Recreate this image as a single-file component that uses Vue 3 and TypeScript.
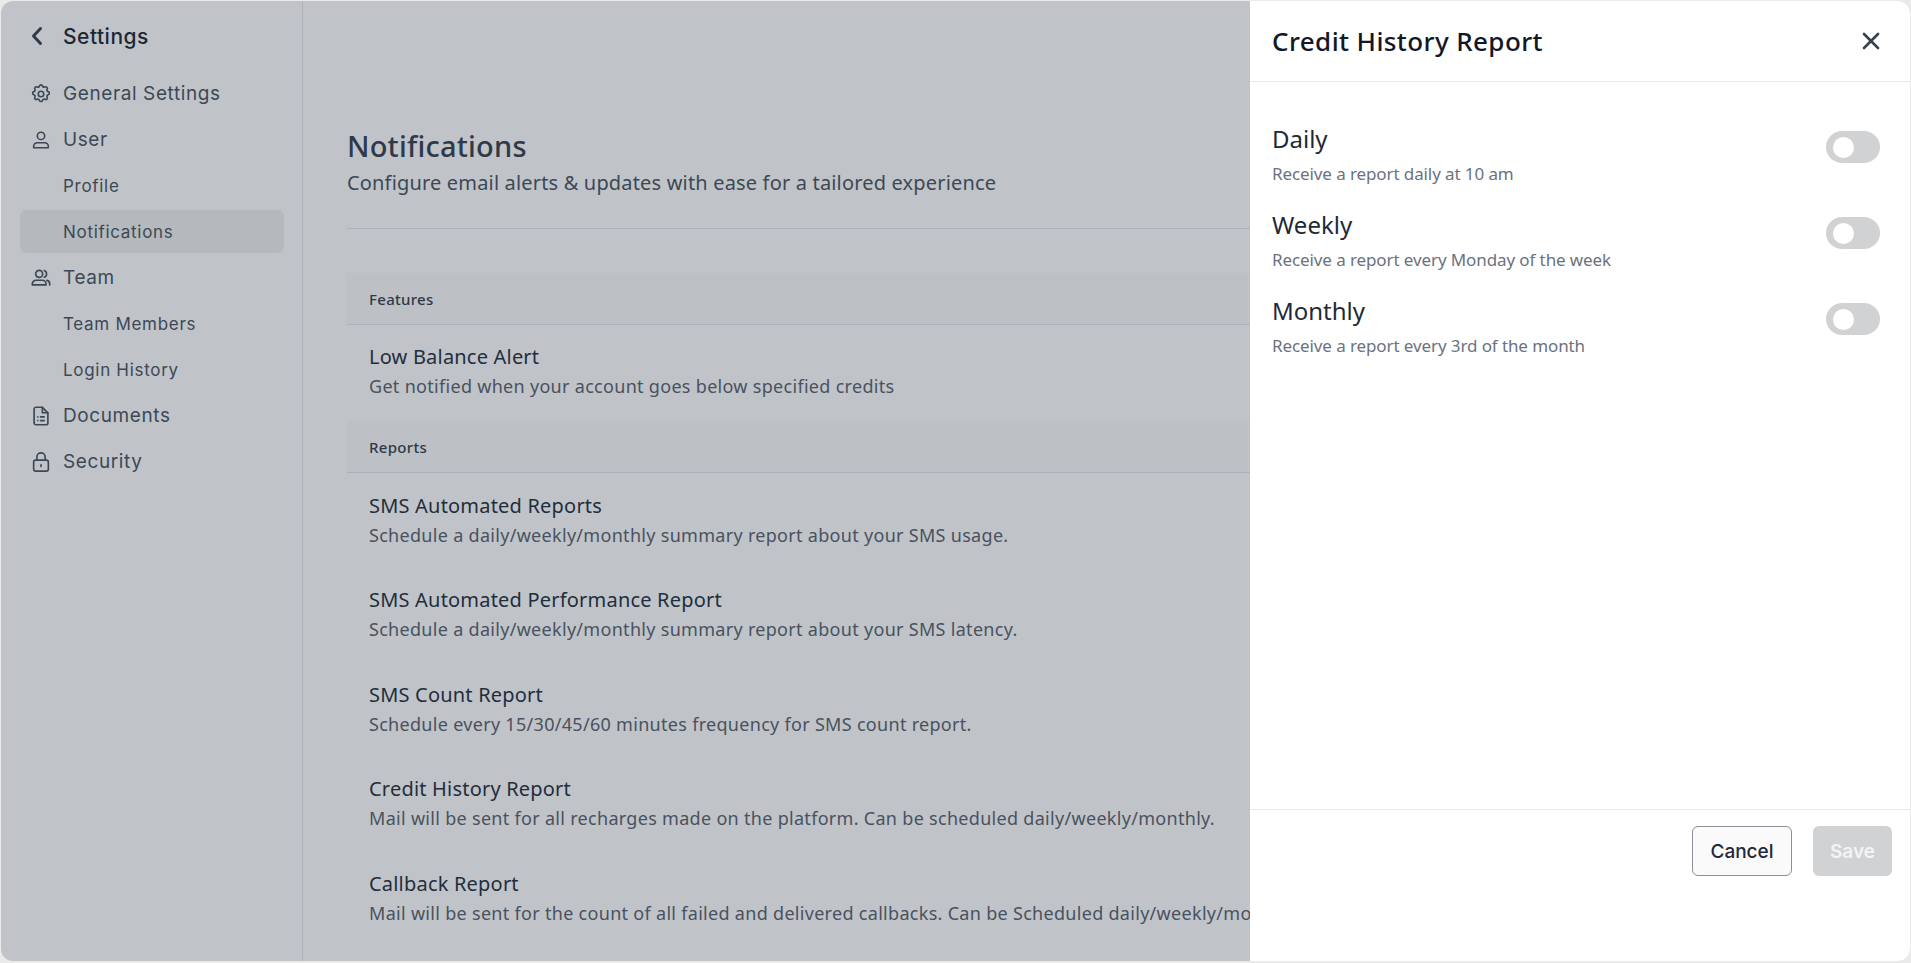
<script setup lang="ts">
interface NavItem { label: string; icon?: string; active?: boolean }
const nav: NavItem[] = [
  { label: 'General Settings', icon: 'gear' },
  { label: 'User', icon: 'user' },
  { label: 'Profile' },
  { label: 'Notifications', active: true },
  { label: 'Team', icon: 'team' },
  { label: 'Team Members' },
  { label: 'Login History' },
  { label: 'Documents', icon: 'doc' },
  { label: 'Security', icon: 'lock' },
]
const reports = [
  ['SMS Automated Reports', 'Schedule a daily/weekly/monthly summary report about your SMS usage.'],
  ['SMS Automated Performance Report', 'Schedule a daily/weekly/monthly summary report about your SMS latency.'],
  ['SMS Count Report', 'Schedule every 15/30/45/60 minutes frequency for SMS count report.'],
  ['Credit History Report', 'Mail will be sent for all recharges made on the platform. Can be scheduled daily/weekly/monthly.'],
  ['Callback Report', 'Mail will be sent for the count of all failed and delivered callbacks. Can be Scheduled daily/weekly/monthly.'],
]
const options = [
  ['Daily', 'Receive a report daily at 10 am'],
  ['Weekly', 'Receive a report every Monday of the week'],
  ['Monthly', 'Receive a report every 3rd of the month'],
]
</script>

<template>
  <div class="frame">
    <div class="page">
      <aside class="sidebar">
        <div class="back">
          <svg class="chev" width="24" height="24" viewBox="0 0 24 24" fill="none" stroke="currentColor" stroke-width="3" stroke-linecap="round" stroke-linejoin="round"><path d="M15.5 4.5L8.5 12l7 7.5" /></svg>
          <span>Settings</span>
        </div>
        <nav class="nav">
          <div v-for="item in nav" :key="item.label" class="nav-item" :class="{ active: item.active, sub: !item.icon }">
            <span class="ico">
              <svg v-if="item.icon === 'gear'" width="22" height="22" viewBox="0 0 24 24" fill="none" stroke="currentColor" stroke-width="1.8" stroke-linecap="round" stroke-linejoin="round">
                <path d="M10.3 3.3a1.75 1.75 0 0 1 3.4 0 1.75 1.75 0 0 0 2.6 1.1 1.75 1.75 0 0 1 2.4 2.4 1.75 1.75 0 0 0 1.1 2.6 1.75 1.75 0 0 1 0 3.4 1.75 1.75 0 0 0-1.1 2.6 1.75 1.75 0 0 1-2.4 2.4 1.75 1.75 0 0 0-2.6 1.1 1.75 1.75 0 0 1-3.4 0 1.75 1.75 0 0 0-2.6-1.1 1.75 1.75 0 0 1-2.4-2.4 1.75 1.75 0 0 0-1.1-2.6 1.75 1.75 0 0 1 0-3.4 1.75 1.75 0 0 0 1.1-2.6 1.75 1.75 0 0 1 2.4-2.4 1.75 1.75 0 0 0 2.6-1.1z" />
                <circle cx="12" cy="12" r="3" />
              </svg>
              <svg v-else-if="item.icon === 'user'" width="22" height="22" viewBox="0 0 24 24" fill="none" stroke="currentColor" stroke-width="1.8" stroke-linecap="round" stroke-linejoin="round">
                <circle cx="12" cy="7.5" r="4" />
                <path d="M4 20.5v-1.5a4 4 0 0 1 4-4h8a4 4 0 0 1 4 4v1.5z" />
              </svg>
              <svg v-else-if="item.icon === 'team'" width="22" height="22" viewBox="0 0 24 24" fill="none" stroke="currentColor" stroke-width="1.8" stroke-linecap="round" stroke-linejoin="round">
                <circle cx="10" cy="7.5" r="3.8" />
                <path d="M2.5 19.5v-1a4 4 0 0 1 4-4h7a4 4 0 0 1 4 4v1z" />
                <path d="M15.5 3.9a3.8 3.8 0 0 1 0 7.2M18.5 14.6a4 4 0 0 1 3 3.9v1" />
              </svg>
              <svg v-else-if="item.icon === 'doc'" width="22" height="22" viewBox="0 0 24 24" fill="none" stroke="currentColor" stroke-width="1.8" stroke-linecap="round" stroke-linejoin="round">
                <path d="M6.5 2.5h7l6 6v11a2 2 0 0 1-2 2h-11a2 2 0 0 1-2-2v-15a2 2 0 0 1 2-2z" />
                <path d="M13.5 2.5v6h6" />
                <path d="M8.5 13h.01M11.5 13h4M8.5 17h.01M11.5 17h4" />
              </svg>
              <svg v-else-if="item.icon === 'lock'" width="22" height="22" viewBox="0 0 24 24" fill="none" stroke="currentColor" stroke-width="1.8" stroke-linecap="round" stroke-linejoin="round">
                <rect x="4" y="10" width="16" height="12" rx="2" />
                <path d="M7.5 10V6.5a4.5 4.5 0 0 1 9 0V10" />
                <path d="M12 15v2" />
              </svg>
            </span>
            <span class="nav-label">{{ item.label }}</span>
          </div>
        </nav>
      </aside>

      <main class="main">
        <h1>Notifications</h1>
        <p class="lead">Configure email alerts &amp; updates with ease for a tailored experience</p>
        <div class="rule"></div>
        <div class="section-head first">Features</div>
        <div class="row feature">
          <div class="row-title">Low Balance Alert</div>
          <div class="row-desc">Get notified when your account goes below specified credits</div>
        </div>
        <div class="section-head">Reports</div>
        <div class="reports">
          <div v-for="r in reports" :key="r[0]" class="row">
            <div class="row-title">{{ r[0] }}</div>
            <div class="row-desc">{{ r[1] }}</div>
          </div>
        </div>
      </main>

      <div class="scrim"></div>

      <section class="drawer">
        <header class="drawer-head">
          <h2>Credit History Report</h2>
          <svg class="close" width="28" height="28" viewBox="0 0 24 24" fill="none" stroke="currentColor" stroke-width="2.3" stroke-linecap="round"><path d="M6 6l12 12M18 6L6 18" /></svg>
        </header>
        <div class="drawer-body">
          <div v-for="o in options" :key="o[0]" class="option">
            <div>
              <div class="opt-title">{{ o[0] }}</div>
              <div class="opt-desc">{{ o[1] }}</div>
            </div>
            <span class="toggle"><span class="knob"></span></span>
          </div>
        </div>
        <footer class="drawer-foot">
          <button class="btn cancel" type="button">Cancel</button>
          <button class="btn save" type="button">Save</button>
        </footer>
      </section>
    </div>
  </div>
</template>

<style>
html, body { margin: 0; background: #eaeaea; }
</style>

<style scoped>
.frame { width: 1911px; height: 963px; box-sizing: border-box; padding: 1px 1px 2px 1px; overflow: hidden; }
.page {
  position: relative; width: 100%; height: 100%; display: flex; overflow: hidden;
  background: #fff; border-radius: 12px; font-family: "Noto Sans", sans-serif; color: #1f2937;
}
.sidebar { width: 302px; flex: none; box-sizing: border-box; padding: 16px 18px 0 19px; border-right: 1px solid #e5e7eb; font-family: "Inter", sans-serif; }
.back { height: 38px; display: flex; align-items: center; gap: 14px; padding-left: 5px; font-size: 21px; font-weight: 500; color: #1f2937; letter-spacing: 0.5px; }
.chev { color: #374151; flex: none; }
.nav { margin-top: 17px; display: flex; flex-direction: column; gap: 3px; }
.nav-item { height: 43px; display: flex; align-items: center; border-radius: 6px; font-size: 19px; color: #4b5563; padding-left: 10px; letter-spacing: 0.6px; }
.nav-item.sub { font-size: 17px; letter-spacing: 0.7px; }
.nav-item.active { background: #f0f0f1; }
.ico { width: 33px; flex: none; display: flex; color: #4b5563; }
.main { flex: 1; min-width: 0; padding: 127px 0 0 44px; white-space: nowrap; overflow: hidden; }
h1 { margin: 0; font-size: 29px; line-height: 36px; font-weight: 500; color: #374151; letter-spacing: 0.2px; }
.lead { margin: 5px 0 0; font-size: 20px; line-height: 28px; color: #4b5563; letter-spacing: 0.17px; }
.rule { height: 1px; background: #e5e7eb; margin-top: 31px; }
.section-head { height: 52px; box-sizing: border-box; background: #fbfbfb; border-bottom: 1px solid #e5e7eb; padding-left: 22px; display: flex; align-items: center; font-size: 15px; font-weight: 500; color: #374151; letter-spacing: 0.3px; }
.section-head.first { margin-top: 44px; }
.row { padding-left: 22px; }
.feature { height: 96px; padding-top: 18px; box-sizing: border-box; }
.reports { padding-top: 19px; display: flex; flex-direction: column; gap: 36.4px; }
.row-title { font-size: 20px; line-height: 28px; color: #263040; letter-spacing: 0.2px; }
.row-desc { font-size: 18px; line-height: 30px; color: #5b6370; letter-spacing: 0.3px; }
.scrim { position: absolute; inset: 0; background: rgba(27, 39, 56, 0.275); }
.drawer { position: absolute; top: 0; right: 0; bottom: 0; width: 660px; background: #fff; display: flex; flex-direction: column; color: #111827; }
.drawer-head { height: 81px; box-sizing: border-box; flex: none; border-bottom: 1px solid #e9eaec; padding: 0 22px; display: flex; align-items: center; justify-content: space-between; }
h2 { margin: 0; font-size: 26px; font-weight: 500; color: #111827; letter-spacing: 0.4px; }
.close { color: #374151; margin-right: 3px; }
.drawer-body { flex: 1; padding: 42px 30px 0 22px; display: flex; flex-direction: column; gap: 14px; }
.option { height: 72px; display: flex; justify-content: space-between; align-items: flex-start; }
.opt-title { font-size: 24px; line-height: 30px; color: #1f2937; }
.opt-desc { margin-top: 8px; font-size: 17px; line-height: 24px; color: #6b7280; letter-spacing: -0.1px; }
.toggle { width: 54px; height: 32px; margin-top: 7px; border-radius: 16px; background: #d1d2d4; display: flex; align-items: center; box-sizing: border-box; padding-left: 7px; }
.knob { width: 21px; height: 21px; border-radius: 50%; background: #fff; }
.drawer-foot { height: 152px; box-sizing: border-box; flex: none; border-top: 1px solid #e9eaec; display: flex; justify-content: flex-end; gap: 21px; padding: 16px 18px 0 0; }
.btn { height: 50px; border-radius: 6px; font-family: "Inter", sans-serif; font-size: 19px; font-weight: 500; box-sizing: border-box; }
.cancel { width: 100px; background: #fafafa; border: 1px solid #8b8f98; color: #1f2937; }
.save { width: 79px; background: #d1d2d4; border: 0; color: #f3f4f6; font-weight: 600; }
</style>
